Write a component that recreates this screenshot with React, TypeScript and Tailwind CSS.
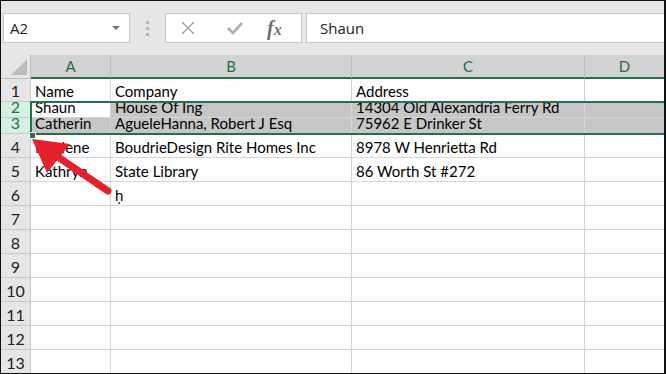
import React from "react";

const cols = [
  { key: "A", w: "w-[80px]" },
  { key: "B", w: "w-[241px]" },
  { key: "C", w: "w-[233px]" },
  { key: "D", w: "w-[80px]" },
];

const rows: { n: number; h: string; cells: string[] }[] = [
  { n: 1, h: "h-[23px]", cells: ["Name", "Company", "Address", ""] },
  { n: 2, h: "h-[16px]", cells: ["Shaun", "House Of Ing", "14304 Old Alexandria Ferry Rd", ""] },
  { n: 3, h: "h-[16px]", cells: ["Catherin", "AgueleHanna, Robert J Esq", "75962 E Drinker St", ""] },
  { n: 4, h: "h-[24px]", cells: ["Marlene", "BoudrieDesign Rite Homes Inc", "8978 W Henrietta Rd", ""] },
  { n: 5, h: "h-[24px]", cells: ["Kathryn", "State Library", "86 Worth St #272", ""] },
  { n: 6, h: "h-[24px]", cells: ["", "ḥ", "", ""] },
  ...[7, 8, 9, 10, 11, 12, 13].map((n) => ({ n, h: "h-[24px]", cells: ["", "", "", ""] })),
];

const cellFont = { fontFamily: "Lato, 'Noto Sans', sans-serif" };

function Toolbar() {
  return (
    <div className="flex h-[54px] items-start bg-[#e6e6e6] pt-[12px]" style={{ fontFamily: "'Open Sans', 'Noto Sans', sans-serif" }}>
      <div className="ml-[2px] flex h-[30px] w-[127px] items-center justify-between border border-[#c6c6c6] bg-white pl-[6px] pr-[9px] text-[15px] text-[#222]">
        <span>A2</span>
        <span className="h-0 w-0 border-x-[4px] border-t-[4px] border-x-transparent border-t-[#777]" />
      </div>
      <div className="ml-[16px] mr-[16px] flex h-[30px] flex-col items-center justify-center gap-[3px]">
        <span className="h-[3px] w-[3px] bg-[#b4b4b4]" />
        <span className="h-[3px] w-[3px] bg-[#b4b4b4]" />
        <span className="h-[3px] w-[3px] bg-[#b4b4b4]" />
      </div>
      <div className="flex h-[30px] w-[137px] items-center border border-[#c6c6c6] bg-white">
        <svg width="16" height="16" viewBox="0 0 16 16" className="ml-[14px]">
          <path d="M2 2 L14 14 M14 2 L2 14" stroke="#a6a6a6" strokeWidth="1.5" />
        </svg>
        <svg width="18" height="16" viewBox="0 0 18 16" className="ml-[30px]">
          <path d="M2 8 L7 13 L16 3" stroke="#b0b0b0" strokeWidth="2.8" fill="none" />
        </svg>
        <span className="ml-[23px] text-[20px] font-bold italic leading-none text-[#707070]" style={{ fontFamily: "'Liberation Serif', serif" }}>
          f<span className="text-[16px]">x</span>
        </span>
      </div>
      <div className="ml-[4px] flex h-[30px] flex-1 items-center border border-r-0 border-[#c6c6c6] bg-white pl-[13px] text-[15px] text-[#222]">
        Shaun
      </div>
    </div>
  );
}

function HeaderRow() {
  return (
    <div className="flex h-[24px]" style={cellFont}>
      <div className="relative h-[24px] w-[30px] shrink-0 border-r border-b border-[#bfbfbf] bg-[#e6e6e6]">
        <span className="absolute bottom-[3px] right-[3px] h-0 w-0" style={{ borderBottom: "16px solid #bdbdbd", borderLeft: "16px solid transparent" }} />
      </div>
      {cols.map((c) => (
        <div
          key={c.key}
          className={`${c.w} flex h-[24px] shrink-0 items-center justify-center border-r border-b-2 border-r-[#bdbdbd] border-b-[#217346] bg-[#d2d2d2] text-[15px] text-[#1e6b48]`}
        >
          {c.key}
        </div>
      ))}
    </div>
  );
}

function DataRow({ n, h, cells }: { n: number; h: string; cells: string[] }) {
  const sel = n === 2 || n === 3;
  return (
    <div className={`flex ${h} shrink-0`} style={cellFont}>
      <div
        className={`flex w-[30px] shrink-0 items-end justify-center overflow-hidden border-r border-b border-[#c8c8c8] pb-[1px] text-[16px] leading-[18px] ${
          sel ? "bg-[#d3f0e0] text-[#217346]" : "bg-[#e6e6e6] text-[#222]"
        }`}
      >
        {n}
      </div>
      {cells.map((t, i) => (
        <div
          key={i}
          className={`${cols[i].w} flex shrink-0 items-end overflow-hidden whitespace-nowrap border-r border-b border-[#d4d4d4] pb-[1px] pl-[4px] text-[15px] leading-[18px] text-black ${
            sel && !(n === 2 && i === 0) ? "bg-[#c6c6c6] border-[#b4b4b4]" : "bg-white"
          }`}
        >
          {t}
        </div>
      ))}
    </div>
  );
}

export default function App() {
  return (
    <div className="relative h-[374px] w-[666px] overflow-hidden border-t border-l border-b border-r-2 border-[#111] bg-white">
      <Toolbar />
      <div className="relative">
        <HeaderRow />
        {rows.map((r) => (
          <DataRow key={r.n} {...r} />
        ))}
        <div className="pointer-events-none absolute left-[29px] top-[46px] h-[34px] w-[640px] border-2 border-[#217346]" />
        <div className="pointer-events-none absolute left-[28px] top-[77px] h-[7px] w-[7px] border border-white bg-[#217346]" />
      </div>
      <svg className="pointer-events-none absolute left-0 top-0" width="666" height="374" viewBox="-1 -1 666 374">
        <line x1="106" y1="189" x2="56" y2="155" stroke="#e5222b" strokeWidth="7" strokeLinecap="round" />
        <polygon points="30,137 68,142 45,171" fill="#e5222b" />
      </svg>
    </div>
  );
}
